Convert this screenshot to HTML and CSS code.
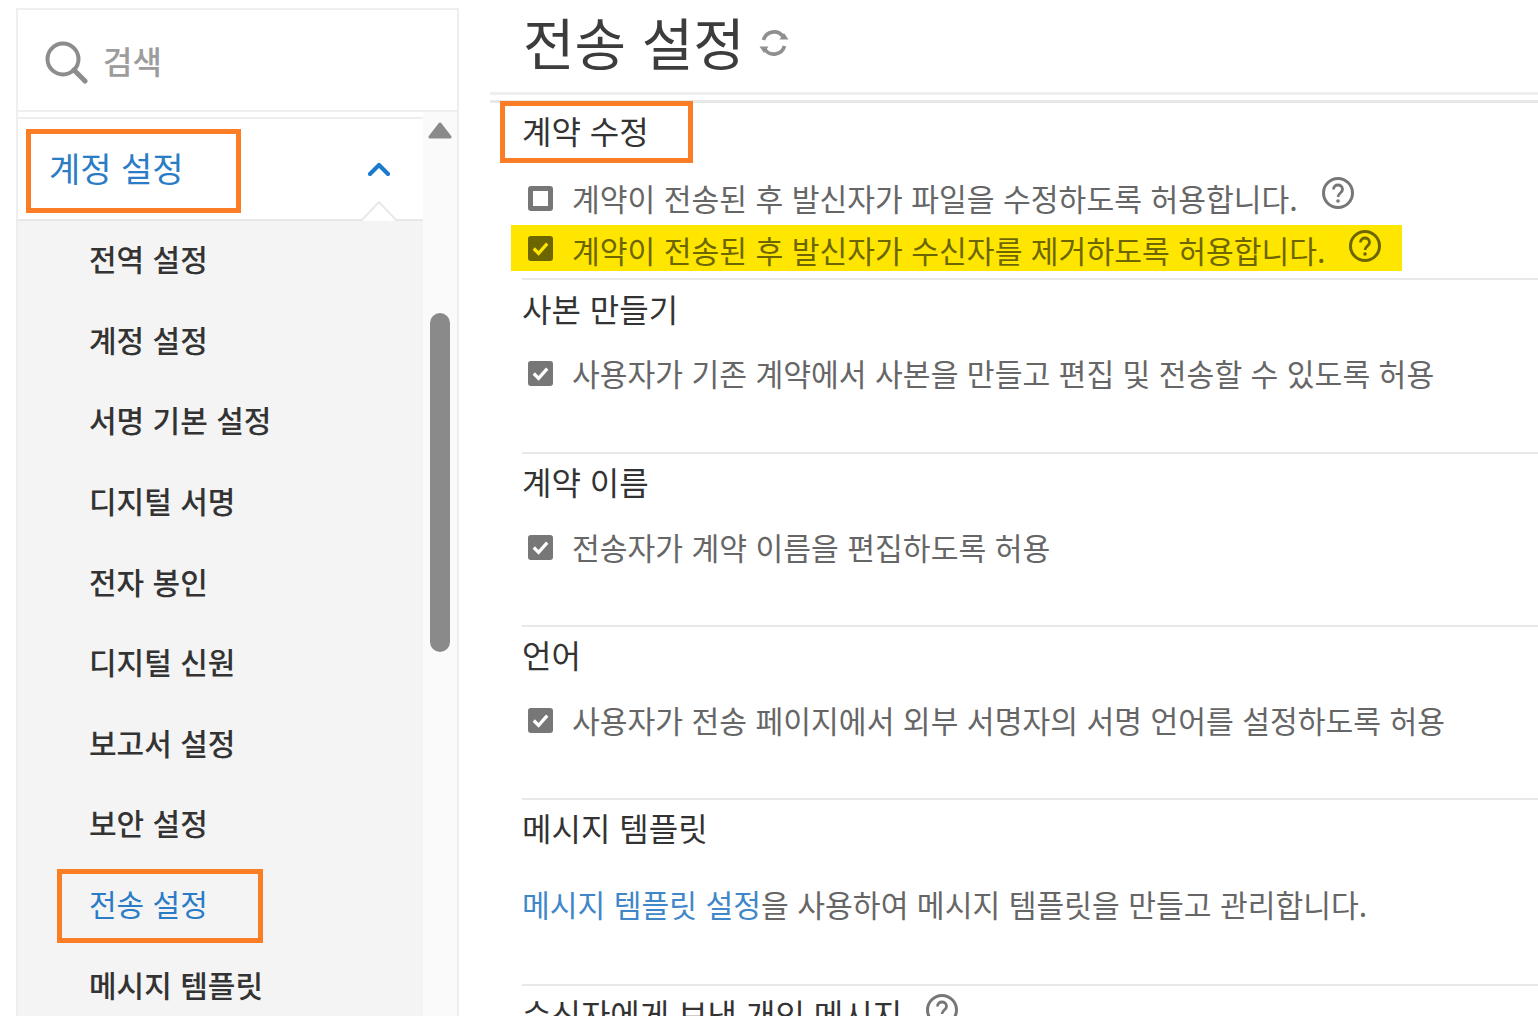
FILE: index.html
```html
<!DOCTYPE html>
<html lang="ko">
<head>
<meta charset="utf-8">
<title>전송 설정</title>
<link rel="stylesheet" href="styles.css">
</head>
<body>
<div class="page">
  <aside class="sidebar">
    <div class="search">
      <svg class="search-icon" viewBox="0 0 44 44" fill="none"><circle cx="19" cy="19" r="15.5" stroke="#8c8c8c" stroke-width="4"/><path d="M30 30l11 11" stroke="#8c8c8c" stroke-width="5" stroke-linecap="round"/></svg>
      <span class="search-text">검색</span>
    </div>
    <div class="nav-wrap">
      <nav class="nav">
        <div class="nav-head">
          <span class="nav-head-text">계정 설정</span>
          <svg class="chevron" viewBox="0 0 22 14" fill="none"><path d="M2 12L11 3l9 9" stroke="#1b7acb" stroke-width="4.2" stroke-linecap="round" stroke-linejoin="round"/></svg>
          <span class="annot annot-head"></span>
          <svg class="notch" viewBox="0 0 36 20"><path d="M0 20L18 1l18 19" fill="#fff" stroke="#e8e8e8" stroke-width="2"/></svg>
        </div>
        <ul class="sub">
          <li class="sub-item">전역 설정</li>
          <li class="sub-item">계정 설정</li>
          <li class="sub-item">서명 기본 설정</li>
          <li class="sub-item">디지털 서명</li>
          <li class="sub-item">전자 봉인</li>
          <li class="sub-item">디지털 신원</li>
          <li class="sub-item">보고서 설정</li>
          <li class="sub-item">보안 설정</li>
          <li class="sub-item sub-active">전송 설정<span class="annot annot-sub"></span></li>
          <li class="sub-item">메시지 템플릿</li>
        </ul>
      </nav>
      <div class="scrollbar">
        <svg class="scroll-up" viewBox="0 0 24 18"><path d="M12 2L22 15H2z" fill="#8a8a8a" stroke="#8a8a8a" stroke-width="3" stroke-linejoin="round"/></svg>
        <div class="scroll-thumb"></div>
      </div>
    </div>
  </aside>
  <main class="content">
    <header class="title-bar">
      <h1 class="title">전송 설정</h1>
      <svg class="refresh" viewBox="0 0 32 32" fill="none"><path d="M5.500 13A11 11 0 0 1 25 9.500" stroke="#8f8f8f" stroke-width="3.600"/><path d="M26.500 19A11 11 0 0 1 7 22.500" stroke="#8f8f8f" stroke-width="3.600"/><path d="M21.500 12.500h9l-4.500-6.500z" fill="#8f8f8f"/><path d="M10.500 19.500h-9l4.500 6.500z" fill="#8f8f8f"/></svg>
    </header>
    <section class="sec sec-edit">
      <h2 class="sec-head">계약 수정</h2>
      <span class="annot annot-sec"></span>
      <div class="opt opt-first">
        <span class="box"></span>
        <span class="opt-text">계약이 전송된 후 발신자가 파일을 수정하도록 허용합니다.</span>
        <svg class="help" viewBox="0 0 34 34" fill="none"><circle cx="17" cy="17" r="14.5" stroke="#777" stroke-width="3"/><path d="M12.5 13.5c0-6 9-6 9 0 0 3.500-4.500 3.500-4.500 7.500" stroke="#777" stroke-width="2.800"/><circle cx="17" cy="25" r="1.800" fill="#777"/></svg>
      </div>
      <div class="opt opt-mark">
        <svg class="check" viewBox="0 0 26 26"><rect width="26" height="26" rx="3" fill="#6d6600"/><path d="M6 13l5 5 9-10" fill="none" stroke="#ffe600" stroke-width="3.400"/></svg>
        <span class="opt-text">계약이 전송된 후 발신자가 수신자를 제거하도록 허용합니다.</span>
        <svg class="help" viewBox="0 0 34 34" fill="none"><circle cx="17" cy="17" r="14.5" stroke="#6d6600" stroke-width="3"/><path d="M12.5 13.5c0-6 9-6 9 0 0 3.500-4.500 3.500-4.500 7.500" stroke="#6d6600" stroke-width="2.800"/><circle cx="17" cy="25" r="1.800" fill="#6d6600"/></svg>
      </div>
    </section>
    <section class="sec sec-copy">
      <h2 class="sec-head">사본 만들기</h2>
      <div class="opt">
        <svg class="check" viewBox="0 0 26 26"><rect width="26" height="26" rx="3" fill="#777"/><path d="M6 13l5 5 9-10" fill="none" stroke="#fff" stroke-width="3.400"/></svg>
        <span class="opt-text">사용자가 기존 계약에서 사본을 만들고 편집 및 전송할 수 있도록 허용</span>
      </div>
    </section>
    <section class="sec">
      <h2 class="sec-head">계약 이름</h2>
      <div class="opt">
        <svg class="check" viewBox="0 0 26 26"><rect width="26" height="26" rx="3" fill="#777"/><path d="M6 13l5 5 9-10" fill="none" stroke="#fff" stroke-width="3.400"/></svg>
        <span class="opt-text">전송자가 계약 이름을 편집하도록 허용</span>
      </div>
    </section>
    <section class="sec">
      <h2 class="sec-head">언어</h2>
      <div class="opt">
        <svg class="check" viewBox="0 0 26 26"><rect width="26" height="26" rx="3" fill="#777"/><path d="M6 13l5 5 9-10" fill="none" stroke="#fff" stroke-width="3.400"/></svg>
        <span class="opt-text">사용자가 전송 페이지에서 외부 서명자의 서명 언어를 설정하도록 허용</span>
      </div>
    </section>
    <section class="sec sec-msg">
      <h2 class="sec-head">메시지 템플릿</h2>
      <p class="msg-text"><a class="link" href="#">메시지 템플릿 설정</a>을 사용하여 메시지 템플릿을 만들고 관리합니다.</p>
    </section>
    <section class="sec sec-last">
      <h2 class="sec-head">수신자에게 보낸 개인 메시지
        <svg class="help help-inline" viewBox="0 0 34 34" fill="none"><circle cx="17" cy="17" r="14.5" stroke="#777" stroke-width="3"/><path d="M12.5 13.5c0-6 9-6 9 0 0 3.500-4.500 3.500-4.500 7.500" stroke="#777" stroke-width="2.800"/><circle cx="17" cy="25" r="1.800" fill="#777"/></svg>
      </h2>
    </section>
  </main>
</div>
</body>
</html>
```
FILE: styles.css
```css
* { box-sizing: border-box; }
html, body { margin: 0; padding: 0; height: 1016px; overflow: hidden; background: #fff; }
body { font-family: "Noto Sans CJK KR", "Liberation Sans", sans-serif; color: #333; }
.page { display: flex; height: 1016px; overflow: hidden; }

.sidebar {
  width: 443px; margin: 8px 0 0 16px; flex: none;
  border: 2px solid #eee; border-bottom: 0;
  display: flex; flex-direction: column;
}
.search {
  height: 102px; flex: none; display: flex; align-items: center; gap: 15px;
  padding: 0 0 0 26px; border-bottom: 2px solid #eee;
}
.search-icon { width: 44px; height: 44px; flex: none; margin-top: 3px; }
.search-text { font-size: 32px; color: #9c9c9c; font-weight: 500; line-height: 1; }

.nav-wrap { flex: 1; display: flex; min-height: 0; }
.nav { width: 405px; flex: none; margin-top: 5px; border-top: 2px solid #eee; }
.nav-head {
  position: relative; height: 102px; display: flex; align-items: center;
  justify-content: space-between; padding: 0 33px 2px 31px; border-bottom: 2px solid #e8e8e8;
}
.nav-head-text { font-size: 34px; color: #2b7cc6; line-height: 1; margin-top: -1px; }
.chevron { width: 22px; height: 14px; margin-top: 1px; }
.notch { position: absolute; right: 26px; bottom: -2px; width: 36px; height: 20px; }
.sub { list-style: none; margin: 0; padding: 0; background: #f4f4f4; height: 820px; }
.sub-item {
  position: relative; height: 80.6px; padding: 0 0 6px 71px; display: flex; align-items: center;
  font-size: 30px; color: #333; font-weight: 500; line-height: 1;
}
.sub-active { color: #2b7cc6; font-weight: 400; }

.annot { position: absolute; border: 5px solid #fb7d26; pointer-events: none; }
.annot-head { left: 8px; top: 10px; width: 215px; height: 84px; }
.annot-sub { left: 39px; top: 3px; width: 206px; height: 74px; }
.annot-sec { left: 10px; top: -2px; width: 193px; height: 62px; }

.scrollbar { flex: 1; background: #fafafa; position: relative; display: flex; flex-direction: column; align-items: center; padding-right: 1px; }
.scroll-up { width: 24px; height: 18px; margin-top: 10px; }
.scroll-thumb { width: 20px; height: 339px; margin-top: 173px; background: #8a8a8a; border-radius: 10px; }

.content { flex: 1; margin-left: 31px; min-width: 0; }
.title-bar {
  height: 95px; display: flex; align-items: center; gap: 13px; padding: 0 0 10px 33px;
  border-bottom: 3px solid #eee;
}
.title { margin: 0; font-size: 56px; font-weight: 400; color: #3c3c3c; line-height: 1; }
.refresh { width: 32px; height: 32px; flex: none; margin-top: 4px; }

.sec { position: relative; margin-left: 32px; border-top: 2px solid #e8e8e8; padding-top: 1px; height: 173px; }
.sec-head { margin: 0; font-size: 32px; font-weight: 400; color: #333; line-height: 52px; height: 52px; }
.opt {
  display: flex; align-items: center; height: 52px; font-size: 30.2px; color: #666; line-height: 1;
  padding-left: 6px; gap: 19px; margin-top: 14px;
}
.sec-edit { margin-left: 0; margin-top: 5px; padding-left: 32px; border-top-width: 3px; height: 178px; }
.sec-copy { height: 174px; padding-top: 2px; }
.sec-copy .opt { margin-top: 13px; }
.opt-first { margin-top: 16px; }
.opt-mark {
  margin: 1px 0 0 -11px; padding-left: 17px; width: 891px; height: 46px;
  background: #ffe600; color: #6d6600;
}
.opt-mark .opt-text { margin-top: 4px; }
.box { width: 25px; height: 25px; border: 5px solid #777; border-radius: 3px; flex: none; }
.check { width: 25px; height: 25px; flex: none; }
.help { width: 34px; height: 34px; flex: none; margin: -10px 0 0 4px; }
.opt-mark .help { margin-top: -4px; }
.help-inline { margin: 0 0 0 14px; vertical-align: 0; }
.sec-msg { height: 186px; }
.msg-text { margin: 25px 0 0; font-size: 30.2px; color: #666; line-height: 52px; }
.link { color: #3f87c9; text-decoration: none; }
.sec-last { height: 60px; }
```
